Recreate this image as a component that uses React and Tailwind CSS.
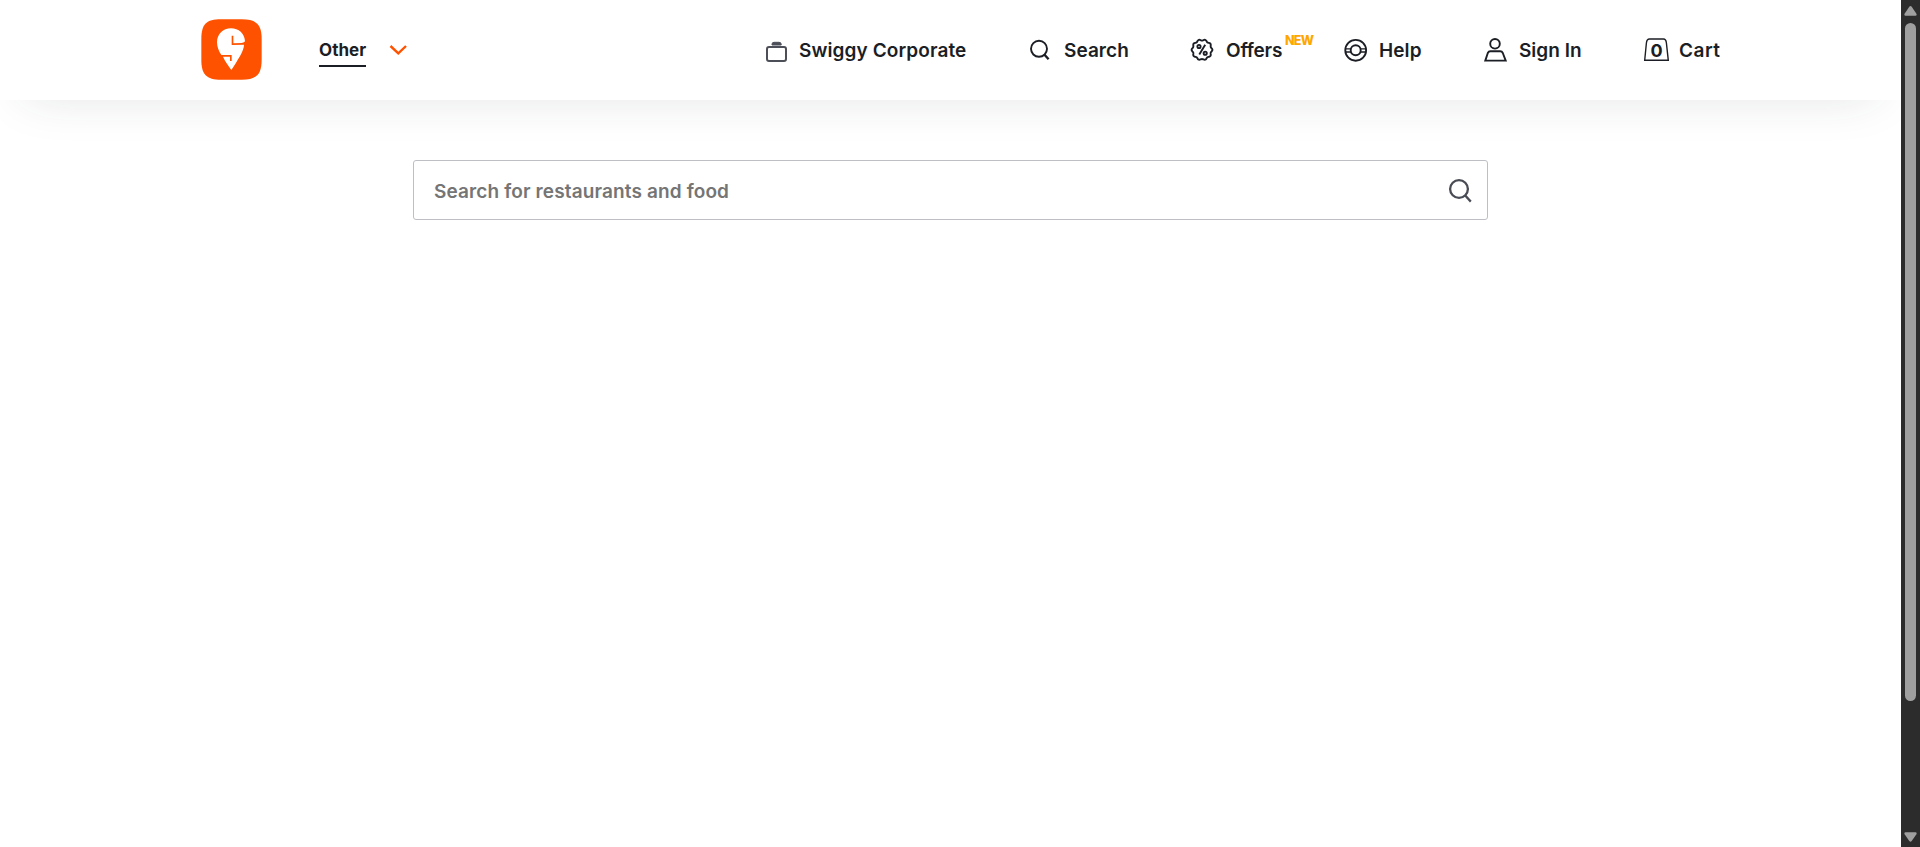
import React from "react";

const badgePath =
  Array.from({ length: 120 }, (_, i) => {
    const a = (i / 120) * Math.PI * 2;
    const r = 9.8 + 0.6 * Math.cos(a * 10);
    return `${i ? "L" : "M"}${(13 + r * Math.cos(a)).toFixed(2)} ${(13.8 + r * Math.sin(a)).toFixed(2)}`;
  }).join("") + "Z";

function Icon({ children }) {
  return (
    <svg width="28" height="28" viewBox="0 0 28 28" fill="none" stroke="#1b1e24" strokeWidth="1.9" className="shrink-0">
      {children}
    </svg>
  );
}

function NavItem({ width, gap, tracking, label, icon, badge }) {
  return (
    <li className={`flex h-full shrink-0 items-center whitespace-nowrap ${width} ${gap}`}>
      {icon}
      <span className={`relative pt-[2px] ${tracking}`}>
        {label}
        {badge}
      </span>
    </li>
  );
}

function Header() {
  return (
    <header className="flex h-[100px] shrink-0 items-center bg-white pl-[201px] shadow-[0_19px_50px_-25px_rgba(40,44,63,0.15)]">
      <svg width="61" height="61" viewBox="0 0 183 183" className="mb-[2px] shrink-0">
        <path d="M1 60C1 16 16 1 60 1H122C166 1 182 16 182 60V122C182 166 166 182 122 182H60C16 182 1 166 1 122Z" fill="#ff5200" />
        <path d="M48 70C48 46 66 28 90 28C113 28 131 44 132 67Q131 71 122 72L97 73V50H92V78L129 77C130 94 108 126 91 153C82 140 72 127 66 113L87 113V126H92V108L61 108C53 98 48 82 48 70Z" fill="#fff" />
      </svg>
      <div className="ml-[57px] flex w-[70px] items-center">
        <span className="border-b-2 border-[#1b1e24] pt-[6px] pb-[5px] text-[17px] leading-[20px] font-bold tracking-[0.05px]">Other</span>
      </div>
      <svg width="18" height="12" viewBox="0 0 18 12" fill="none" stroke="#ff5200" strokeWidth="2.4" className="shrink-0">
        <path d="M1.5 2L9.3 9.3L17 2" />
      </svg>
      <ul className="ml-[357px] flex h-full text-[19px] font-semibold">
        <NavItem
          width="w-[264px]" gap="gap-[7px]" tracking="tracking-[0.1px]" label="Swiggy Corporate"
          icon={<Icon><g stroke="#4c4f58" strokeWidth="2"><rect x="3" y="11" width="19" height="14" rx="2" /><path d="M8 9V8.2Q8 6.3 10 6.3H15Q17.2 6.3 17.2 8.2V9Z" fill="#4c4f58" strokeWidth="1" /></g></Icon>}
        />
        <NavItem
          width="w-[161px]" gap="gap-[8px]" tracking="tracking-[0.05px]" label="Search"
          icon={<Icon><circle cx="11" cy="12.8" r="8" /><path d="M16.3 18.5L20.6 23.2" strokeWidth="2.4" /></Icon>}
        />
        <NavItem
          width="w-[153px]" gap="gap-[9px]" tracking="tracking-[-0.2px]" label="Offers"
          icon={<Icon><path d={badgePath} /><circle cx="10" cy="10.5" r="1.6" /><circle cx="16.2" cy="17.2" r="1.6" /><path d="M16.2 8.8L10.3 18.4" /></Icon>}
          badge={<span className="absolute top-[-1px] left-[59px] text-[12.5px] leading-[14px] font-extrabold tracking-[-0.7px] text-[#ffa700]">NEW</span>}
        />
        <NavItem
          width="w-[140px]" gap="gap-[9px]" tracking="tracking-[0.1px]" label="Help"
          icon={<Icon><circle cx="13.7" cy="14.3" r="10.4" /><circle cx="13.7" cy="14.3" r="5" /><path d="M3.5 12.9H9M3.5 16H9M18.5 12.9H24M18.5 16H24" strokeWidth="1.4" /></Icon>}
        />
        <NavItem
          width="w-[160px]" gap="gap-[9px]" tracking="tracking-[0px]" label="Sign In"
          icon={<Icon><circle cx="13" cy="7.8" r="4.8" /><path d="M3.3 24.6L5.8 17Q6.6 15.3 8.4 15.3H18.2Q20 15.3 20.8 17L23.7 24.6Z" /></Icon>}
        />
        <NavItem
          width="w-[80px]" gap="gap-[9px]" tracking="tracking-[0.5px]" label="Cart"
          icon={
            <span className="relative flex size-7 items-center justify-center">
              <Icon><path d="M2.7 24.3L4.4 7Q4.8 3 7.5 3H21.5Q24 3 24.4 7L26.3 24.3Z" strokeWidth="1.4" /></Icon>
              <span className="absolute top-[4px] left-[8.5px] text-[18px] leading-[21px] font-bold">0</span>
            </span>
          }
        />
      </ul>
    </header>
  );
}

function Scrollbar() {
  return (
    <div className="flex h-full w-[19px] shrink-0 flex-col items-center bg-[#2c2c2c]">
      <svg width="19" height="23" viewBox="0 0 19 23" fill="#9f9f9f"><path d="M8.3 6.8Q9.5 5.4 10.7 6.8L15.6 14Q16 15.7 14.6 15.8H4.4Q3 15.7 3.4 14Z" /></svg>
      <div className="h-[678px] w-[11px] rounded-full bg-[#9f9f9f]" />
      <svg width="19" height="23" viewBox="0 0 19 23" fill="#9f9f9f" className="mt-auto"><path d="M8.3 17Q9.5 18.4 10.7 17L15.6 10Q16 8.4 14.6 8.2H4.4Q3 8.4 3.4 10Z" /></svg>
    </div>
  );
}

export default function App() {
  return (
    <div className="flex h-[847px] w-full overflow-hidden bg-white font-['Inter',sans-serif] text-[#1b1e24]">
      <div className="flex min-w-0 flex-1 flex-col overflow-hidden">
        <Header />
        <main className="flex justify-center pt-[60px]">
          <div className="flex h-[60px] w-[1075px] items-center justify-between rounded-[3px] border border-[#bebfc5] bg-white pr-[14px] pl-[20px]">
            <span className="pt-[4px] text-[19px] font-semibold tracking-[0.13px] text-[#757575]">Search for restaurants and food</span>
            <svg width="26" height="28" viewBox="0 0 26 28" fill="none" stroke="#4a4c55" strokeWidth="2.3">
              <circle cx="12" cy="13" r="8.9" /><path d="M18 19.3L23.8 25.6" />
            </svg>
          </div>
        </main>
      </div>
      <Scrollbar />
    </div>
  );
}
